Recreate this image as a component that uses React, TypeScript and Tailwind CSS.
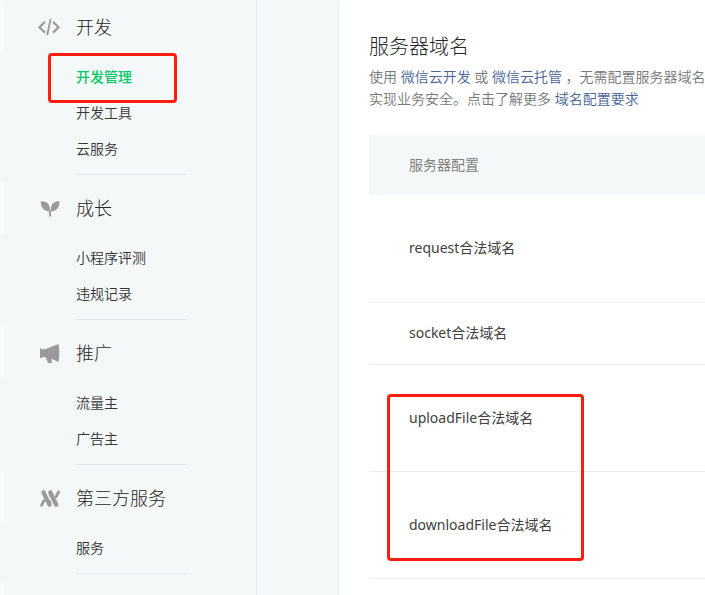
import type { ReactNode } from 'react';

interface MenuSection {
  title: string;
  icon: ReactNode;
  items: string[];
}

const iconClass = 'w-6 h-6 shrink-0';

function CodeIcon() {
  return (
    <svg viewBox="0 0 24 24" className={iconClass} fill="none" stroke="#9a9a9a" strokeWidth="2.2">
      <path d="M7 6.800 1.500 12.200 7 17.600M15 6.800l5.500 5.400-5.500 5.400" />
      <path d="M12.600 4 9.200 20.200" strokeWidth="1.800" />
    </svg>
  );
}

function SproutIcon() {
  return (
    <svg viewBox="0 0 24 24" className={iconClass} fill="#9a9a9a">
      <path d="M2.700 5.300c6-.2 9.300 2.400 9.300 9.300v1C6 15.600 2.700 11.800 2.700 5.300z" />
      <path d="M21.500 5.300c-5.300-.1-8.700 2.400-8.700 8.900v1.300c5.600-.2 8.700-3.900 8.700-10.200z" />
      <path d="M11 14.500h2v5.900h-2z" />
    </svg>
  );
}

function MegaphoneIcon() {
  return (
    <svg viewBox="0 0 24 24" className={iconClass} fill="#9a9a9a">
      <path d="M2 7.500h1.500v.8h3.500L20.500 3c1 5.600 1 12 0 18l-7.300-3.200.8 4.200h-4L7.800 16.300H3.500v.7H2z" />
    </svg>
  );
}

function ServiceIcon() {
  return (
    <svg viewBox="0 0 24 24" className={iconClass} fill="none" stroke="#9a9a9a" strokeLinecap="round">
      <path d="M5.400 6.300 11.500 18.700M12.200 6.300l6.100 12.400" strokeWidth="4.200" />
      <path d="M20.600 5.900 18.200 10.600M5.900 14.600 3.500 19.300" strokeWidth="2.800" />
      <path d="M11.200 7.500l.8 3M12.200 14.500l.8 3" strokeWidth="1" />
    </svg>
  );
}

const sections: MenuSection[] = [
  { title: '开发', icon: <CodeIcon />, items: ['开发管理', '开发工具', '云服务'] },
  { title: '成长', icon: <SproutIcon />, items: ['小程序评测', '违规记录'] },
  { title: '推广', icon: <MegaphoneIcon />, items: ['流量主', '广告主'] },
  { title: '第三方服务', icon: <ServiceIcon />, items: ['服务'] },
];

const domains = [
  { name: 'request合法域名', height: 'h-[107px]' },
  { name: 'socket合法域名', height: 'h-[62px]' },
  { name: 'uploadFile合法域名', height: 'h-[107px]', marked: true },
  { name: 'downloadFile合法域名', height: 'h-[107px]' },
];

function Sidebar() {
  const active = '开发管理';

  return (
    <nav className="w-[257px] shrink-0 border-r border-[#e4e8eb] pt-px">
      {sections.map((section) => (
        <section key={section.title} className="mb-[7px]">
          <div className="flex h-[52px] items-center">
            <span className="w-1 self-stretch bg-[#f8fafb]" />
            <div className="ml-[34px] flex items-center gap-3.5">
              {section.icon}
              <h2 className="text-lg font-light text-[#252525]">{section.title}</h2>
            </div>
          </div>
          <ul className="ml-[76px] mr-[70px] border-b border-[#e4e8eb] pt-1.5 pb-[7px]">
            {section.items.map((item) => (
              <li key={item} className="relative flex h-9 items-center">
                <a href="#" className={item === active ? 'font-medium text-[#07c766]' : 'text-[#353535]'}>
                  {item}
                </a>
                {item === active && (
                  <span className="pointer-events-none absolute -top-1.5 -left-7 h-[50px] w-[129px] rounded-sm border-3 border-[#ff1d0f]" />
                )}
              </li>
            ))}
          </ul>
        </section>
      ))}
      <span className="block h-[52px] w-1 bg-[#f8fafb]" />
    </nav>
  );
}

function DomainTable() {
  return (
    <table className="mt-[25px] w-full text-left">
      <thead>
        <tr className="h-[60px] bg-[#f4f8f9] text-[#7e8081]">
          <th className="pl-10 font-normal">服务器配置</th>
        </tr>
      </thead>
      <tbody>
        {domains.map((domain) => (
          <tr key={domain.name} className={domain.height}>
            <td className="relative border-b border-[#eeeeee] pl-10 font-normal text-[#404040]">
              {domain.name}
              {domain.marked && (
                <span className="pointer-events-none absolute top-[29px] left-[18px] h-[167px] w-[197px] rounded-sm border-3 border-[#ff1d0f]" />
              )}
            </td>
          </tr>
        ))}
      </tbody>
    </table>
  );
}

export default function App() {
  return (
    <div className="flex h-screen overflow-hidden bg-[#f4f8f9] font-['Noto_Sans','Noto_Sans_CJK_SC',sans-serif] text-sm font-[350]">
      <Sidebar />
      <main className="ml-[81px] min-w-0 flex-1 overflow-hidden rounded-tl border-l border-[#e9edef] bg-white pt-[33px] pl-[30px]">
        <h1 className="text-xl font-light text-[#252525]">服务器域名</h1>
        <p className="mt-[5px] leading-[22px] whitespace-nowrap text-[#757778]">
          使用 <a href="#" className="text-[#4a6496]">微信云开发</a> 或{' '}
          <a href="#" className="text-[#4a6496]">微信云托管</a> ，无需配置服务器域名
          <br />
          实现业务安全。点击了解更多 <a href="#" className="text-[#4a6496]">域名配置要求</a>
        </p>
        <DomainTable />
      </main>
    </div>
  );
}
